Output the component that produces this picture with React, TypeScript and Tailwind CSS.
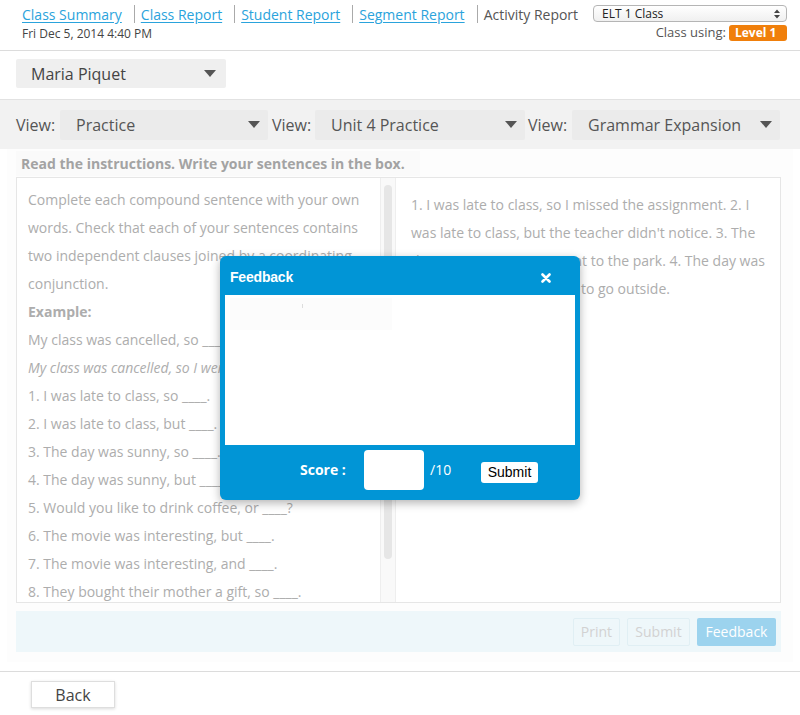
import React from "react";

const NAV = ["Class Summary", "Class Report", "Student Report", "Segment Report"];

const LEFT_LINES = [
  "1. I was late to class, so ____.",
  "2. I was late to class, but ____.",
  "3. The day was sunny, so ____.",
  "4. The day was sunny, but ____.",
  "5. Would you like to drink coffee, or ____?",
  "6. The movie was interesting, but ____.",
  "7. The movie was interesting, and ____.",
  "8. They bought their mother a gift, so ____.",
];

const Caret = () => (
  <svg width="12" height="7" viewBox="0 0 12 7" className="shrink-0">
    <path d="M0 0 H12 L6 7 Z" fill="#555" />
  </svg>
);

const ViewSelect = ({ value, width }: { value: string; width: string }) => (
  <div className={`${width} h-[30px] bg-[#ebebeb] rounded-[2px] flex items-center justify-between pl-[16px] pr-[8px]`}>
    <span className="text-[16px] text-[#555]">{value}</span>
    <Caret />
  </div>
);

export default function App() {
  return (
    <div
      className="relative w-[800px] h-[715px] overflow-hidden bg-white text-[#555]"
      style={{ fontFamily: "'Open Sans', 'Liberation Sans', sans-serif" }}
    >
      {/* Header */}
      <div className="h-[51px] border-b border-[#dcdcdc] flex justify-between pl-[22px] pr-[13px] pt-[4px]">
        <div>
          <div className="h-[20px] flex items-center text-[14px]">
            {NAV.map((label) => (
              <React.Fragment key={label}>
                <span className="text-[#2aa3dc] underline underline-offset-2">{label}</span>
                <span className="w-px h-[18px] bg-[#aaa] ml-[12px] mr-[6px]" />
              </React.Fragment>
            ))}
            <span className="text-[#555]">Activity Report</span>
          </div>
          <div className="text-[12px] mt-[1px] text-[#444]">Fri Dec 5, 2014 4:40 PM</div>
        </div>
        <div className="w-[194px] flex flex-col items-end">
          <div className="mt-[1px] w-[194px] h-[17px] border border-[#b5b5b5] rounded-[4px] bg-gradient-to-b from-white to-[#f0f0f0] flex items-center justify-between pl-[8px] pr-[6px]">
            <span className="text-[12px] text-[#222] leading-none">ELT 1 Class</span>
            <svg width="6" height="10" viewBox="0 0 6 10">
              <path d="M0 4 L3 0.5 L6 4 Z M0 6 L3 9.5 L6 6 Z" fill="#444" />
            </svg>
          </div>
          <div className="flex items-center mt-[1px]">
            <span className="text-[13px] text-[#555] mr-[3px]">Class using:</span>
            <span className="w-[58px] h-[16px] rounded-[3px] bg-[#f07f0b] text-white font-bold text-[12px] leading-[16px] pl-[6px]">
              Level 1
            </span>
          </div>
        </div>
      </div>

      {/* Student select */}
      <div className="ml-[16px] mt-[8px] w-[210px] h-[29px] bg-[#efefef] rounded-[2px] flex items-center justify-between pl-[15px] pr-[10px]">
        <span className="text-[16px] text-[#444]">Maria Piquet</span>
        <Caret />
      </div>

      {/* View bar */}
      <div className="mt-[11px] h-[50px] bg-[#f2f2f2] border-t border-[#e2e2e2] flex items-center pl-[16px] text-[16px]">
        <span className="w-[44px]">View:</span>
        <ViewSelect value="Practice" width="w-[208px]" />
        <span className="w-[43px] ml-[4px]">View:</span>
        <ViewSelect value="Unit 4 Practice" width="w-[210px]" />
        <span className="w-[44px] ml-[3px]">View:</span>
        <ViewSelect value="Grammar Expansion" width="w-[208px]" />
      </div>

      {/* Faded activity area */}
      <div className="bg-[#fdfdfd] mx-[7px] pb-[10px]">
        <div className="pl-[9px] h-[28px] flex items-center">
          <span className="bg-[#fafafa] pl-[5px] pr-[15px] text-[14px] font-bold text-[#a3a3a3] leading-[25px]">
            Read the instructions. Write your sentences in the box.
          </span>
        </div>

        <div className="ml-[9px] mr-[12px] h-[426px] border border-[#e6e6e6] bg-white flex overflow-hidden">
          <div className="w-[363px] pl-[11px] pt-[8px] text-[14px] leading-[28px] text-[#adadad]">
            <div>Complete each compound sentence with your own</div>
            <div>words. Check that each of your sentences contains</div>
            <div>two independent clauses joined by a coordinating</div>
            <div>conjunction.</div>
            <div className="font-bold">Example:</div>
            <div>My class was cancelled, so ____.</div>
            <div className="italic">My class was cancelled, so I went home.</div>
            {LEFT_LINES.map((l) => (
              <div key={l}>{l}</div>
            ))}
          </div>
          <div className="w-[16px] bg-[#f9f9f9] border-x border-[#eeeeee] pt-[7px] flex justify-center">
            <div className="w-[8px] h-[374px] rounded-full bg-[#e6e6e6]" />
          </div>
          <div className="flex-1 pl-[15px] pt-[13px] text-[14px] leading-[28px] text-[#adadad]">
            <div>1. I was late to class, so I missed the assignment. 2. I</div>
            <div>was late to class, but the teacher didn't notice. 3. The</div>
            <div>day was sunny, so we went to the park. 4. The day was</div>
            <div>sunny, but it was too cold to go outside.</div>
          </div>
        </div>

        <div className="ml-[9px] mr-[12px] mt-[8px] h-[41px] bg-[#eef7fa] flex items-center justify-end pr-[5px] gap-[7px]">
          <div className="w-[47px] h-[28px] border border-[#e0eff4] rounded-[2px] text-[14px] text-[#d2d2d2] flex items-center justify-center">
            Print
          </div>
          <div className="w-[63px] h-[28px] border border-[#e0eff4] rounded-[2px] text-[14px] text-[#d2d2d2] flex items-center justify-center">
            Submit
          </div>
          <div className="w-[79px] h-[28px] bg-[#9cd3ee] rounded-[2px] text-[14px] text-white flex items-center justify-center">
            Feedback
          </div>
        </div>
      </div>

      <div className="mt-[9px] border-t border-[#dcdcdc]" />
      <div className="ml-[31px] mt-[9px] w-[84px] h-[27px] bg-white border border-[#dedede] shadow-[0_1px_3px_rgba(0,0,0,0.15)] flex items-center justify-center text-[16px] text-[#444]">
        Back
      </div>

      {/* Feedback modal */}
      <div className="absolute left-[220px] top-[256px] w-[360px] h-[244px] bg-[#0195d6] rounded-[6px] shadow-[0_3px_10px_rgba(0,0,0,0.3)] flex flex-col">
        <div
          className="h-[39px] flex items-center justify-between pl-[10px] pr-[29px] pt-[4px] text-white"
          style={{ fontFamily: "'Liberation Sans', Arial, sans-serif" }}
        >
          <span className="text-[14px] font-bold tracking-[-0.2px]">Feedback</span>
          <svg width="10" height="10" viewBox="0 0 10 10">
            <path d="M1.5 1.5 L8.5 8.5 M8.5 1.5 L1.5 8.5" stroke="white" strokeWidth="2.6" strokeLinecap="round" />
          </svg>
        </div>
        <div className="mx-[5px] h-[150px] bg-white pt-[3px] pl-[5px]">
          <div className="relative w-[162px] h-[32px] bg-[#fcfcfc]">
            <div className="absolute left-[72px] top-[6px] w-px h-[4px] bg-[#ddd]" />
          </div>
        </div>
        <div className="flex-1 flex items-start pt-[5px] pl-[80px] text-white text-[14px]">
          <span className="font-bold w-[64px] mt-[9px]">Score :</span>
          <div className="w-[60px] h-[40px] bg-white rounded-[4px]" />
          <span className="ml-[6px] w-[51px] mt-[9px]">/10</span>
          <div
            className="w-[57px] h-[21px] bg-white rounded-[3px] text-black text-[14px] flex items-center justify-center mt-[12px]"
            style={{ fontFamily: "'Liberation Sans', Arial, sans-serif" }}
          >
            Submit
          </div>
        </div>
      </div>
    </div>
  );
}
